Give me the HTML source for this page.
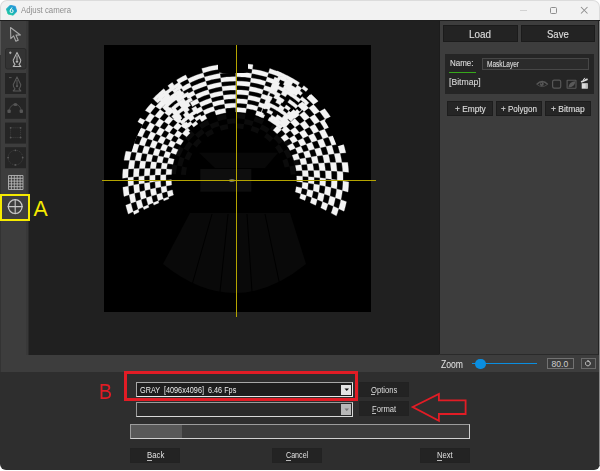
<!DOCTYPE html>
<html><head><meta charset="utf-8">
<style>
*{margin:0;padding:0;box-sizing:border-box}
html,body{width:600px;height:471px;overflow:hidden;background:#ffffff;font-family:"Liberation Sans",sans-serif}
.a{position:absolute}
.t{position:absolute;white-space:pre;transform-origin:0 0;line-height:1}
.bd{-webkit-text-stroke:0.15px currentColor}
#win{position:absolute;left:0;top:0;width:600px;height:470px;overflow:hidden}
.btn{position:absolute;background:#232323;border:1px solid #1b1b1b}
.sb{position:absolute;background:#252525;border:1px solid #1d1d1d}
.tb{position:absolute;left:5px;width:21px;height:21px;background:#262626;border-radius:1px}
</style></head><body>
<div id="win">
  <div class="a" style="left:0;top:19px;width:600px;height:451px;background:#2e2e2e;border-radius:0 0 6px 6px"></div>
  <div class="a" style="left:0;top:0;width:600px;height:20px;background:#f2f2f2;border-top:1px solid #dcdcdc;border-left:1px solid #dcdcdc;border-right:1px solid #dcdcdc;border-radius:7px 7px 0 0"></div>
  <svg class="a" style="left:6px;top:5px" width="11" height="11" viewBox="0 0 11 11">
    <defs><linearGradient id="ig" x1="0.8" y1="0" x2="0.1" y2="1"><stop offset="0" stop-color="#1f8fe0"/><stop offset="1" stop-color="#1ccf9a"/></linearGradient></defs>
    <polygon points="4.2,0.2 9.3,1.4 10.8,6.4 7.2,10.2 2.0,9.0 0.4,4.0" fill="url(#ig)" stroke="url(#ig)" stroke-width="0.8" stroke-linejoin="round"/>
    <path d="M6.3,2.6 Q4.2,3.6 4.1,6.0 A1.5,1.5 0 1 0 5.6,4.6" fill="none" stroke="#fff" stroke-width="1"/>
  </svg>
  <div class="t" style="left:20.5px;top:5px;font-size:9.4px;color:#8e8e8e;transform:scaleX(0.835)">Adjust camera</div>
  <div class="a" style="left:520px;top:10px;width:7px;height:1px;background:#d2d2d2"></div>
  <div class="a" style="left:550px;top:7px;width:7px;height:7px;border:1px solid #8e8e8e;border-radius:1.5px"></div>
  <svg class="a" style="left:580px;top:6px" width="9" height="9" viewBox="0 0 9 9"><path d="M1,1 L7.5,7.5 M7.5,1 L1,7.5" stroke="#8e8e8e" stroke-width="1.05"/></svg>
  <div class="a" style="left:0;top:20px;width:600px;height:1px;background:#1e1e1e"></div>

  <!-- toolbar + zoom bar background -->
  <div class="a" style="left:0;top:21px;width:2px;height:351px;background:#333"></div>
  <div class="a" style="left:0;top:21px;width:1px;height:34px;background:#555"></div>
  <div class="a" style="left:1px;top:21px;width:598px;height:351px;background:#3d3d3d"></div>
  <div class="a" style="left:26px;top:21px;width:2px;height:334px;background:#383838"></div>
  <!-- canvas -->
  <div class="a" style="left:29px;top:21px;width:410px;height:334px;background:#202020"></div>
  <div class="a" style="left:28px;top:21px;width:1px;height:334px;background:#2c2c2c"></div>
  <!-- right panel borders -->
  <div class="a" style="left:439px;top:21px;width:1px;height:334px;background:#1c1c1c"></div>
  <div class="a" style="left:439px;top:354px;width:160px;height:1px;background:#2a2a2a"></div>
  <div class="a" style="left:597.5px;top:21px;width:1px;height:334px;background:#232323"></div>
  <div class="a" style="left:599px;top:21px;width:1px;height:444px;background:#8a8a8a"></div>

  <!-- toolbar icons -->
  <svg class="a" style="left:0;top:22px" width="29" height="200" viewBox="0 22 29 200">
    <path d="M10.5,27.5 L10.8,38.6 L13.6,35.9 L15.9,41.2 L18.2,40.2 L16,35.1 L20.4,35 Z" fill="none" stroke="#a8a8a8" stroke-width="1.1" stroke-linejoin="round"/>
    <rect x="5.5" y="48.5" width="20.5" height="20.5" rx="2" fill="#333" stroke="#2a2a2a" stroke-width="1"/>
    <path d="M10.3,51.5 v2.6 M9,52.8 h2.6" stroke="#bbb" stroke-width="0.9"/>
    <path d="M17,52.4 L13.2,60.2 Q13.4,62.6 15,64.4 L13.2,66.4 H20.8 L19,64.4 Q20.6,62.6 20.8,60.2 Z M17,55.5 v5" fill="none" stroke="#b4b4b4" stroke-width="1.05" stroke-linejoin="round"/>
    <circle cx="17" cy="61.6" r="1.2" fill="#b4b4b4"/>
    <rect x="5" y="73" width="21" height="21" fill="#252525"/>
    <path d="M9,77.6 h2.6" stroke="#5c5c5c" stroke-width="0.9"/>
    <path d="M17,76.9 L13.2,84.7 Q13.4,87.1 15,88.9 L13.2,90.9 H20.8 L19,88.9 Q20.6,87.1 20.8,84.7 Z M17,80 v5" fill="none" stroke="#585858" stroke-width="1.05" stroke-linejoin="round"/>
    <circle cx="17" cy="86.1" r="1.2" fill="#585858"/>
    <rect x="5" y="97.8" width="21" height="21" fill="#252525"/>
    <path d="M9.2,111.3 C9.6,102.2 20.8,102.2 21.2,111.3" fill="none" stroke="#4e4e4e" stroke-width="0.9"/>
    <rect x="7.4" y="109.6" width="3.4" height="3.4" rx="1" fill="#555"/>
    <rect x="19.6" y="109.6" width="3.4" height="3.4" rx="1" fill="#555"/>
    <ellipse cx="15.4" cy="104.6" rx="2" ry="1.5" fill="#555"/>
    <rect x="5" y="122.6" width="21" height="21" fill="#252525"/>
    <rect x="10.6" y="127.8" width="10" height="9.8" fill="none" stroke="#474747" stroke-width="0.8" stroke-dasharray="1,1"/>
    <circle cx="10.6" cy="127.8" r="0.9" fill="#585858"/><circle cx="20.6" cy="127.8" r="0.9" fill="#585858"/>
    <circle cx="10.6" cy="137.6" r="0.9" fill="#585858"/><circle cx="20.6" cy="137.6" r="0.9" fill="#585858"/>
    <rect x="5" y="147.2" width="21" height="21" fill="#252525"/>
    <circle cx="15.4" cy="157.6" r="7.3" fill="none" stroke="#474747" stroke-width="0.8" stroke-dasharray="1,1"/>
    <circle cx="15.4" cy="150.3" r="0.9" fill="#5a5a5a"/><circle cx="15.4" cy="164.9" r="0.9" fill="#5a5a5a"/>
    <circle cx="8.1" cy="157.6" r="0.9" fill="#5a5a5a"/><circle cx="22.7" cy="157.6" r="0.9" fill="#5a5a5a"/>
    <path d="M8.5,175.5 v14 M11.4,175.5 v14 M14.3,175.5 v14 M17.2,175.5 v14 M20.1,175.5 v14 M23,175.5 v14 M8.5,175.5 h14.5 M8.5,178.3 h14.5 M8.5,181.1 h14.5 M8.5,183.9 h14.5 M8.5,186.7 h14.5 M8.5,189.5 h14.5" stroke="#b4b4b4" stroke-width="0.9"/>
    <rect x="1" y="195" width="28" height="25" fill="#3e3e3e"/>
    <circle cx="15.2" cy="206.6" r="6.9" fill="none" stroke="#c8c8c8" stroke-width="1.2"/>
    <path d="M7.6,206.6 h15.2 M15.2,199 v15.2" stroke="#c8c8c8" stroke-width="1.1"/>
  </svg>

  <!-- image -->
  <div class="a" style="left:104px;top:45px;width:267px;height:267px;background:#000">
    <svg width="267" height="267" viewBox="0 0 267 267" style="position:absolute;left:0;top:0"><defs><filter id="bl" x="-5%" y="-5%" width="110%" height="110%"><feGaussianBlur stdDeviation="0.6"/></filter></defs><path d="M86.0 168.0 L59.0 219.0 Q131.0 277.0 202.0 219.0 L186.0 168.0 Z" fill="#090909"/><path d="M108.0 169.0L88.0 240.0M124.0 169.0L116.0 247.0M143.0 169.0L148.0 247.0M161.0 169.0L176.0 241.0" stroke="#000" stroke-width="1"/><path fill="#0b0b0b" d="M76.9 129.7L77.1 128.0L77.3 126.4L77.5 124.7L77.8 123.1L78.1 121.5L83.0 122.6L82.7 124.1L82.4 125.5L82.2 127.0L82.0 128.5L81.9 130.0ZM67.0 129.0L67.1 127.0L67.3 125.1L67.6 123.2L68.0 121.2L68.4 119.3L73.2 120.4L72.9 122.2L72.6 123.9L72.3 125.7L72.1 127.5L71.9 129.3ZM73.2 120.4L73.7 118.7L74.1 116.9L74.7 115.2L75.2 113.5L75.9 111.8L80.5 113.6L79.9 115.2L79.4 116.7L78.9 118.3L78.5 119.9L78.1 121.5ZM80.5 113.6L81.1 112.1L81.8 110.6L82.5 109.1L83.3 107.6L84.1 106.2L88.4 108.7L87.7 110.0L87.0 111.3L86.4 112.7L85.7 114.0L85.2 115.4ZM71.2 110.0L71.9 108.2L72.7 106.4L73.6 104.6L74.5 102.9L75.4 101.2L79.7 103.7L78.9 105.3L78.0 106.9L77.3 108.5L76.5 110.1L75.9 111.8ZM79.7 103.7L80.7 102.1L81.6 100.6L82.6 99.1L83.7 97.7L84.8 96.2L88.7 99.3L87.7 100.6L86.7 102.0L85.8 103.4L84.9 104.7L84.1 106.2ZM88.7 99.3L89.7 98.1L90.8 96.8L91.9 95.6L93.1 94.4L94.3 93.3L97.7 96.9L96.6 98.0L95.6 99.0L94.5 100.1L93.6 101.3L92.6 102.4ZM80.9 93.1L82.1 91.6L83.4 90.1L84.7 88.7L86.1 87.3L87.5 86.0L90.9 89.6L89.6 90.9L88.3 92.2L87.1 93.5L85.9 94.8L84.8 96.2ZM90.9 89.6L92.2 88.4L93.6 87.2L95.0 86.1L96.4 85.0L97.9 84.0L100.7 88.1L99.4 89.1L98.1 90.1L96.8 91.1L95.5 92.2L94.3 93.3ZM100.7 88.1L102.1 87.2L103.5 86.3L104.9 85.5L106.4 84.7L107.9 84.0L110.0 88.5L108.7 89.2L107.4 89.9L106.1 90.6L104.8 91.4L103.6 92.2ZM95.1 79.9L96.7 78.8L98.4 77.8L100.0 76.8L101.8 75.9L103.5 75.0L105.7 79.5L104.1 80.3L102.5 81.1L100.9 82.0L99.4 83.0L97.9 84.0ZM105.7 79.5L107.3 78.7L109.0 78.0L110.7 77.4L112.3 76.7L114.1 76.2L115.5 81.0L114.0 81.5L112.4 82.0L110.9 82.6L109.4 83.3L107.9 84.0ZM115.5 81.0L117.1 80.5L118.7 80.1L120.3 79.7L121.9 79.4L123.6 79.1L124.3 84.1L122.8 84.3L121.4 84.6L119.9 84.9L118.5 85.3L117.0 85.7ZM112.6 71.4L114.5 70.9L116.3 70.4L118.2 69.9L120.2 69.6L122.1 69.2L122.8 74.2L121.1 74.5L119.3 74.8L117.5 75.2L115.8 75.7L114.1 76.2ZM122.8 74.2L124.6 73.9L126.4 73.7L128.2 73.6L130.0 73.5L131.8 73.5L131.8 78.5L130.1 78.5L128.5 78.6L126.9 78.7L125.2 78.9L123.6 79.1ZM131.8 78.5L133.5 78.5L135.1 78.6L136.7 78.7L138.4 78.9L140.0 79.1L139.3 84.1L137.8 83.9L136.3 83.7L134.8 83.6L133.3 83.5L131.8 83.5ZM131.8 68.5L133.8 68.5L135.7 68.6L137.6 68.8L139.6 69.0L141.5 69.2L140.8 74.2L139.0 73.9L137.2 73.7L135.4 73.6L133.6 73.5L131.8 73.5ZM140.8 74.2L142.5 74.5L144.3 74.8L146.1 75.2L147.8 75.7L149.5 76.2L148.1 81.0L146.5 80.5L144.9 80.1L143.3 79.7L141.7 79.4L140.0 79.1ZM148.1 81.0L149.6 81.5L151.2 82.0L152.7 82.6L154.2 83.3L155.7 84.0L153.6 88.5L152.2 87.9L150.8 87.3L149.4 86.7L148.0 86.2L146.6 85.7ZM151.0 71.4L152.9 72.0L154.7 72.7L156.5 73.4L158.3 74.2L160.1 75.0L157.9 79.5L156.3 78.7L154.6 78.0L152.9 77.4L151.3 76.7L149.5 76.2ZM157.9 79.5L159.5 80.3L161.1 81.1L162.7 82.0L164.2 83.0L165.7 84.0L162.9 88.1L161.5 87.2L160.1 86.3L158.7 85.5L157.2 84.7L155.7 84.0ZM162.9 88.1L164.2 89.1L165.5 90.1L166.8 91.1L168.1 92.2L169.3 93.3L165.9 96.9L164.8 95.9L163.6 95.0L162.5 94.0L161.3 93.1L160.0 92.2ZM168.5 79.9L170.1 81.0L171.7 82.2L173.2 83.4L174.7 84.7L176.1 86.0L172.7 89.6L171.4 88.4L170.0 87.2L168.6 86.1L167.2 85.0L165.7 84.0ZM172.7 89.6L174.0 90.9L175.3 92.2L176.5 93.5L177.7 94.8L178.8 96.2L174.9 99.3L173.9 98.1L172.8 96.8L171.7 95.6L170.5 94.4L169.3 93.3ZM174.9 99.3L175.9 100.6L176.9 102.0L177.8 103.4L178.7 104.7L179.5 106.2L175.2 108.7L174.4 107.4L173.6 106.1L172.8 104.8L171.9 103.6L171.0 102.4ZM182.7 93.1L183.9 94.7L185.1 96.3L186.2 97.9L187.2 99.5L188.2 101.2L183.9 103.7L182.9 102.1L182.0 100.6L181.0 99.1L179.9 97.7L178.8 96.2ZM183.9 103.7L184.7 105.3L185.6 106.9L186.3 108.5L187.1 110.1L187.7 111.8L183.1 113.6L182.5 112.1L181.8 110.6L181.1 109.1L180.3 107.6L179.5 106.2ZM183.1 113.6L183.7 115.2L184.2 116.7L184.7 118.3L185.1 119.9L185.5 121.5L180.6 122.6L180.2 121.1L179.9 119.7L179.4 118.2L178.9 116.8L178.4 115.4ZM192.4 110.0L193.1 111.8L193.7 113.7L194.3 115.5L194.8 117.4L195.2 119.3L190.4 120.4L189.9 118.7L189.5 116.9L188.9 115.2L188.4 113.5L187.7 111.8ZM190.4 120.4L190.7 122.2L191.0 123.9L191.3 125.7L191.5 127.5L191.7 129.3L186.7 129.7L186.5 128.0L186.3 126.4L186.1 124.7L185.8 123.1L185.5 121.5Z"/><path d="M95.0 107.7L174.0 107.7L161.0 123.0L111.0 123.0Z" fill="#080808"/><rect x="96.3" y="124.0" width="51" height="22.7" fill="#0e0e0e"/><ellipse cx="128.0" cy="135.5" rx="3.2" ry="1.1" fill="#d8d8c8"/><g filter="url(#bl)"><path fill="#f4f4f4" stroke="#f4f4f4" stroke-width="0.3" d="M95.3 72.7L97.1 71.6L99.0 70.6L100.9 69.7L102.9 73.6L101.1 74.5L99.3 75.5L97.5 76.5ZM90.7 65.2L92.8 63.9L94.9 62.8L97.1 61.7L99.0 65.7L97.0 66.7L95.0 67.8L93.0 68.9ZM86.2 57.6L88.5 56.3L90.9 55.0L93.3 53.8L95.2 57.8L92.9 58.9L90.7 60.1L88.5 61.4ZM81.7 50.0L84.2 48.6L86.8 47.2L89.4 45.8L91.3 49.8L88.8 51.1L86.4 52.4L83.9 53.8ZM77.1 42.5L79.9 40.9L82.7 39.3L85.6 37.9L87.5 41.9L84.8 43.3L82.0 44.7L79.4 46.3ZM72.6 34.9L75.6 33.2L78.6 31.5L81.7 30.0L83.7 33.9L80.7 35.4L77.7 37.0L74.8 38.7ZM99.0 65.7L101.1 64.7L103.1 63.8L105.3 63.0L107.4 62.3L109.5 61.6L110.8 65.8L108.8 66.4L106.8 67.1L104.8 67.9L102.9 68.8L100.9 69.7ZM95.2 57.8L97.5 56.7L99.8 55.7L102.1 54.8L104.5 53.9L106.9 53.1L108.2 57.3L105.9 58.1L103.7 58.9L101.5 59.8L99.3 60.7L97.1 61.7ZM91.3 49.8L93.9 48.6L96.4 47.5L99.0 46.5L101.7 45.6L104.3 44.7L105.6 48.9L103.1 49.7L100.6 50.6L98.1 51.6L95.7 52.7L93.3 53.8ZM87.5 41.9L90.3 40.6L93.1 39.4L95.9 38.3L98.8 37.2L101.7 36.3L103.0 40.5L100.2 41.4L97.5 42.4L94.8 43.5L92.1 44.6L89.4 45.8ZM83.7 33.9L86.7 32.5L89.7 31.2L92.8 30.0L95.9 28.9L99.1 27.9L100.4 32.1L97.4 33.1L94.4 34.1L91.4 35.3L88.5 36.6L85.6 37.9ZM110.8 65.8L112.9 65.2L114.9 64.6L117.0 64.2L119.1 63.7L121.2 63.4L121.9 67.7L119.9 68.1L117.9 68.5L116.0 68.9L114.1 69.4L112.1 70.0ZM108.2 57.3L110.5 56.7L112.8 56.1L115.2 55.5L117.5 55.1L119.9 54.7L120.5 59.0L118.3 59.4L116.1 59.8L113.9 60.3L111.7 60.9L109.5 61.6ZM105.6 48.9L108.2 48.2L110.7 47.5L113.3 46.9L115.9 46.4L118.6 46.0L119.2 50.3L116.7 50.7L114.2 51.2L111.8 51.8L109.3 52.4L106.9 53.1ZM103.0 40.5L105.8 39.7L108.6 38.9L111.5 38.3L114.4 37.7L117.2 37.2L117.9 41.6L115.1 42.0L112.4 42.6L109.7 43.2L107.0 43.9L104.3 44.7ZM100.4 32.1L103.5 31.2L106.5 30.4L109.7 29.7L112.8 29.0L115.9 28.5L116.6 32.9L113.6 33.4L110.6 34.0L107.6 34.6L104.6 35.4L101.7 36.3ZM97.8 23.6L101.1 22.7L104.4 21.8L107.8 21.0L111.2 20.4L114.6 19.8L115.3 24.2L112.0 24.7L108.7 25.3L105.5 26.1L102.3 26.9L99.1 27.9ZM120.5 59.0L122.8 58.7L125.0 58.5L127.3 58.3L129.5 58.2L131.8 58.2L131.8 62.6L129.7 62.6L127.5 62.7L125.4 62.9L123.3 63.1L121.2 63.4ZM119.2 50.3L121.7 50.0L124.2 49.7L126.8 49.5L129.3 49.4L131.8 49.4L131.8 53.8L129.4 53.8L127.0 53.9L124.6 54.1L122.2 54.3L119.9 54.7ZM117.9 41.6L120.7 41.2L123.4 40.9L126.2 40.7L129.0 40.6L131.8 40.5L131.8 45.0L129.1 45.0L126.5 45.1L123.8 45.3L121.2 45.6L118.6 46.0ZM116.6 32.9L119.6 32.5L122.6 32.1L125.7 31.9L128.7 31.8L131.8 31.7L131.8 36.1L128.9 36.2L126.0 36.3L123.0 36.5L120.1 36.8L117.2 37.2ZM115.3 24.2L118.6 23.7L121.9 23.4L125.2 23.1L128.5 23.0L131.8 22.9L131.8 27.3L128.6 27.4L125.4 27.5L122.3 27.7L119.1 28.1L115.9 28.5ZM131.8 62.6L133.9 62.6L136.1 62.7L138.2 62.9L140.3 63.1L142.4 63.4L141.7 67.7L139.8 67.5L137.8 67.3L135.8 67.1L133.8 67.0L131.8 67.0ZM131.8 53.8L134.2 53.8L136.6 53.9L139.0 54.1L141.4 54.3L143.7 54.7L143.1 59.0L140.8 58.7L138.6 58.5L136.3 58.3L134.1 58.2L131.8 58.2ZM131.8 45.0L134.5 45.0L137.1 45.1L139.8 45.3L142.4 45.6L145.0 46.0L144.4 50.3L141.9 50.0L139.4 49.7L136.8 49.5L134.3 49.4L131.8 49.4ZM131.8 36.1L134.7 36.2L137.6 36.3L140.6 36.5L143.5 36.8L146.4 37.2L145.7 41.6L142.9 41.2L140.2 40.9L137.4 40.7L134.6 40.6L131.8 40.5ZM131.8 27.3L135.0 27.4L138.2 27.5L141.3 27.7L144.5 28.1L147.7 28.5L147.0 32.9L144.0 32.5L141.0 32.1L137.9 31.9L134.9 31.8L131.8 31.7ZM131.8 18.5L135.3 18.6L138.7 18.7L142.1 19.0L145.6 19.3L149.0 19.8L148.3 24.2L145.0 23.7L141.7 23.4L138.4 23.1L135.1 23.0L131.8 22.9ZM143.1 59.0L145.3 59.4L147.5 59.8L149.7 60.3L151.9 60.9L154.1 61.6L152.8 65.8L150.7 65.2L148.7 64.6L146.6 64.2L144.5 63.7L142.4 63.4ZM144.4 50.3L146.9 50.7L149.4 51.2L151.8 51.8L154.3 52.4L156.7 53.1L155.4 57.3L153.1 56.7L150.8 56.1L148.4 55.5L146.1 55.1L143.7 54.7ZM145.7 41.6L148.5 42.0L151.2 42.6L153.9 43.2L156.6 43.9L159.3 44.7L158.0 48.9L155.4 48.2L152.9 47.5L150.3 46.9L147.7 46.4L145.0 46.0ZM147.0 32.9L150.0 33.4L153.0 34.0L156.0 34.6L159.0 35.4L161.9 36.3L160.6 40.5L157.8 39.7L155.0 38.9L152.1 38.3L149.2 37.7L146.4 37.2ZM148.3 24.2L151.6 24.7L154.9 25.3L158.1 26.1L161.3 26.9L164.5 27.9L163.2 32.1L160.1 31.2L157.1 30.4L153.9 29.7L150.8 29.0L147.7 28.5ZM152.8 65.8L155.0 66.5L157.3 67.3L159.5 68.2L157.8 72.3L155.7 71.4L153.6 70.7L151.5 70.0ZM155.4 57.3L157.9 58.2L160.5 59.1L163.0 60.1L161.2 64.2L158.9 63.2L156.5 62.3L154.1 61.6ZM158.0 48.9L160.8 49.8L163.6 50.9L166.4 52.0L164.7 56.1L162.0 55.0L159.4 54.0L156.7 53.1ZM160.6 40.5L163.7 41.5L166.8 42.6L169.8 43.9L168.1 47.9L165.2 46.8L162.3 45.7L159.3 44.7ZM163.2 32.1L166.6 33.2L170.0 34.4L173.3 35.8L171.6 39.8L168.4 38.5L165.2 37.3L161.9 36.3ZM165.8 23.6L169.5 24.9L173.1 26.2L176.7 27.6L175.0 31.7L171.6 30.3L168.0 29.0L164.5 27.9ZM59.9 155.8L59.6 154.8L59.3 153.8L64.3 151.9L64.6 152.8L64.9 153.8ZM49.9 160.1L49.5 158.9L49.2 157.8L54.2 155.8L54.5 156.8L54.8 157.9ZM40.0 164.6L39.5 163.4L39.1 162.1L44.1 159.9L44.5 161.1L44.9 162.3ZM30.2 169.5L29.7 168.1L29.2 166.6L34.2 164.3L34.6 165.7L35.1 167.0ZM64.3 151.9L63.9 150.1L63.5 148.2L63.1 146.4L68.3 145.0L68.7 146.7L69.0 148.4L69.5 150.0ZM54.2 155.8L53.6 153.7L53.1 151.6L52.7 149.5L57.9 147.9L58.3 149.9L58.7 151.8L59.3 153.8ZM44.1 159.9L43.5 157.5L42.8 155.2L42.3 152.8L47.5 151.1L48.0 153.3L48.5 155.6L49.2 157.8ZM34.2 164.3L33.4 161.7L32.7 159.0L32.0 156.4L37.1 154.5L37.7 157.1L38.4 159.6L39.1 162.1ZM24.3 169.0L23.4 166.1L22.6 163.2L21.8 160.3L26.9 158.3L27.6 161.1L28.4 163.9L29.2 166.6ZM57.9 147.9L57.5 145.9L57.2 143.9L57.0 141.9L62.3 140.9L62.5 142.7L62.8 144.6L63.1 146.4ZM47.5 151.1L47.0 148.8L46.6 146.6L46.3 144.3L51.6 143.1L51.9 145.2L52.3 147.3L52.7 149.5ZM37.1 154.5L36.6 152.0L36.2 149.5L35.8 146.9L41.0 145.5L41.4 148.0L41.8 150.4L42.3 152.8ZM26.9 158.3L26.3 155.5L25.7 152.6L25.2 149.8L30.5 148.3L30.9 151.0L31.4 153.7L32.0 156.4ZM62.3 140.9L62.1 139.0L62.0 137.1L61.9 135.3L67.3 134.7L67.4 136.4L67.5 138.1L67.6 139.9ZM51.6 143.1L51.4 140.9L51.2 138.8L51.1 136.6L56.5 135.9L56.6 137.9L56.8 139.9L57.0 141.9ZM41.0 145.5L40.8 143.1L40.5 140.7L40.4 138.2L45.7 137.4L45.9 139.7L46.1 142.0L46.3 144.3ZM30.5 148.3L30.1 145.6L29.9 142.9L29.6 140.1L35.0 139.1L35.2 141.7L35.4 144.3L35.8 146.9ZM20.0 151.4L19.6 148.4L19.2 145.3L18.9 142.3L24.3 141.2L24.5 144.1L24.9 146.9L25.2 149.8ZM56.5 135.9L56.5 133.9L56.5 131.9L56.6 129.9L62.0 129.7L61.9 131.5L61.9 133.4L61.9 135.3ZM45.7 137.4L45.7 135.1L45.7 132.8L45.7 130.5L51.1 130.1L51.1 132.3L51.1 134.4L51.1 136.6ZM35.0 139.1L34.9 136.6L34.8 134.0L34.9 131.4L40.3 130.9L40.2 133.3L40.3 135.8L40.4 138.2ZM24.3 141.2L24.1 138.3L24.0 135.4L24.0 132.6L29.4 131.9L29.4 134.7L29.5 137.4L29.6 140.1ZM62.0 129.7L62.1 127.8L62.3 125.9L62.5 124.1L67.9 124.4L67.7 126.1L67.6 127.8L67.4 129.5ZM51.1 130.1L51.3 128.0L51.4 125.8L51.7 123.7L57.1 123.8L56.9 125.8L56.7 127.8L56.6 129.9ZM40.3 130.9L40.4 128.4L40.6 126.0L40.8 123.5L46.2 123.6L46.0 125.9L45.8 128.2L45.7 130.5ZM29.4 131.9L29.5 129.2L29.7 126.4L29.9 123.7L35.3 123.6L35.1 126.2L34.9 128.8L34.9 131.4ZM18.6 133.3L18.6 130.2L18.8 127.2L19.0 124.2L24.4 123.9L24.2 126.8L24.1 129.7L24.0 132.6ZM57.1 123.8L57.4 121.8L57.7 119.8L58.1 117.9L63.5 118.5L63.1 120.4L62.8 122.2L62.5 124.1ZM46.2 123.6L46.5 121.3L46.9 119.0L47.3 116.7L52.7 117.3L52.3 119.4L52.0 121.5L51.7 123.7ZM35.3 123.6L35.6 121.0L36.0 118.4L36.4 115.9L41.9 116.3L41.4 118.7L41.1 121.1L40.8 123.5ZM24.4 123.9L24.7 121.0L25.1 118.2L25.6 115.3L31.0 115.6L30.6 118.3L30.2 121.0L29.9 123.7ZM63.5 118.5L63.9 116.7L64.4 114.9L64.9 113.1L70.2 114.3L69.7 115.9L69.3 117.6L68.9 119.3ZM52.7 117.3L53.2 115.2L53.7 113.1L54.3 111.0L59.6 112.0L59.1 113.9L58.6 115.9L58.1 117.9ZM41.9 116.3L42.4 113.9L42.9 111.5L43.5 109.1L48.9 110.0L48.3 112.2L47.8 114.5L47.3 116.7ZM31.0 115.6L31.5 112.9L32.1 110.2L32.8 107.5L38.2 108.3L37.5 110.8L37.0 113.3L36.4 115.9ZM20.1 115.2L20.6 112.2L21.2 109.2L21.9 106.3L27.4 106.9L26.7 109.7L26.1 112.5L25.6 115.3ZM59.6 112.0L60.2 110.1L60.9 108.2L61.6 106.3L66.8 107.8L66.1 109.6L65.5 111.3L64.9 113.1ZM48.9 110.0L49.6 107.8L50.3 105.6L51.1 103.4L56.3 104.8L55.6 106.9L54.9 108.9L54.3 111.0ZM38.2 108.3L38.9 105.8L39.6 103.3L40.5 100.9L45.8 102.1L45.0 104.4L44.2 106.8L43.5 109.1ZM27.4 106.9L28.1 104.1L28.9 101.3L29.8 98.6L35.2 99.7L34.3 102.3L33.5 104.9L32.8 107.5ZM66.8 107.8L67.5 106.1L68.2 104.4L69.0 102.7L74.1 104.7L73.3 106.2L72.6 107.8L72.0 109.4ZM56.3 104.8L57.1 102.8L58.0 100.8L58.9 98.9L64.0 100.7L63.1 102.6L62.3 104.4L61.6 106.3ZM45.8 102.1L46.7 99.8L47.6 97.6L48.6 95.3L53.7 97.1L52.8 99.2L51.9 101.3L51.1 103.4ZM35.2 99.7L36.1 97.1L37.1 94.6L38.2 92.0L43.4 93.7L42.4 96.0L41.4 98.4L40.5 100.9ZM24.5 97.5L25.5 94.7L26.5 91.8L27.7 89.0L33.0 90.5L31.8 93.2L30.8 95.9L29.8 98.6ZM64.0 100.7L64.9 98.9L65.8 97.2L66.8 95.4L71.7 97.7L70.8 99.4L69.9 101.0L69.0 102.7ZM53.7 97.1L54.7 95.0L55.8 92.9L56.9 90.9L61.9 93.1L60.8 95.0L59.8 96.9L58.9 98.9ZM43.4 93.7L44.5 91.3L45.7 89.0L46.9 86.7L51.9 88.8L50.7 90.9L49.6 93.1L48.6 95.3ZM33.0 90.5L34.1 87.9L35.4 85.3L36.7 82.7L41.8 84.7L40.5 87.1L39.3 89.6L38.2 92.0ZM71.7 97.7L72.7 96.2L73.7 94.6L74.8 93.0L79.4 95.8L78.5 97.2L77.5 98.7L76.6 100.1ZM61.9 93.1L63.0 91.3L64.1 89.5L65.3 87.7L70.1 90.3L68.9 92.0L67.9 93.7L66.8 95.4ZM51.9 88.8L53.1 86.7L54.4 84.6L55.8 82.5L60.6 85.1L59.3 87.0L58.1 88.9L56.9 90.9ZM41.8 84.7L43.2 82.3L44.6 79.9L46.0 77.6L50.9 80.0L49.5 82.2L48.2 84.4L46.9 86.7ZM31.6 80.8L33.0 78.2L34.6 75.5L36.1 73.0L41.1 75.3L39.6 77.7L38.1 80.2L36.7 82.7ZM70.1 90.3L71.3 88.7L72.5 87.1L73.7 85.5L78.2 88.6L77.0 90.1L75.9 91.5L74.8 93.0ZM60.6 85.1L61.9 83.2L63.3 81.3L64.7 79.5L69.2 82.5L67.9 84.2L66.6 85.9L65.3 87.7ZM50.9 80.0L52.4 77.9L53.9 75.8L55.5 73.7L60.1 76.6L58.6 78.5L57.1 80.5L55.8 82.5ZM41.1 75.3L42.7 72.9L44.3 70.5L46.1 68.2L50.8 70.9L49.1 73.1L47.5 75.3L46.0 77.6ZM78.2 88.6L79.4 87.2L80.7 85.8L82.0 84.4L86.1 87.9L84.9 89.2L83.8 90.5L82.6 91.8ZM69.2 82.5L70.6 80.8L72.1 79.2L73.5 77.6L77.8 81.0L76.4 82.5L75.0 84.0L73.7 85.5ZM60.1 76.6L61.6 74.7L63.2 72.8L64.9 71.0L69.2 74.3L67.7 76.0L66.2 77.7L64.7 79.5ZM50.8 70.9L52.5 68.8L54.2 66.7L56.1 64.6L60.5 67.8L58.8 69.7L57.1 71.7L55.5 73.7ZM41.3 65.5L43.2 63.1L45.1 60.7L47.1 58.5L51.6 61.5L49.7 63.7L47.8 65.9L46.1 68.2ZM77.8 81.0L79.2 79.6L80.7 78.2L82.2 76.8L86.1 80.6L84.7 81.9L83.3 83.1L82.0 84.4ZM69.2 74.3L70.8 72.6L72.5 71.0L74.2 69.5L78.2 73.1L76.6 74.6L75.0 76.1L73.5 77.6ZM60.5 67.8L62.3 65.9L64.1 64.1L66.0 62.3L70.1 65.8L68.3 67.5L66.6 69.2L64.9 71.0ZM51.6 61.5L53.5 59.4L55.5 57.3L57.6 55.3L61.8 58.8L59.9 60.7L57.9 62.6L56.1 64.6ZM173.0 81.0L174.6 82.2L176.0 83.5L177.5 84.8L173.2 88.7L171.8 87.5L170.5 86.3L169.1 85.2ZM181.2 72.7L182.9 74.1L184.6 75.7L186.3 77.2L181.8 81.0L180.3 79.5L178.7 78.1L177.1 76.8ZM189.6 64.6L191.5 66.3L193.5 68.1L195.4 69.9L190.8 73.5L189.0 71.8L187.2 70.2L185.3 68.6ZM198.2 56.8L200.4 58.8L202.6 60.8L204.7 62.9L200.0 66.4L198.0 64.4L196.0 62.5L193.9 60.7ZM207.2 49.3L209.6 51.5L211.9 53.8L214.2 56.2L209.4 59.5L207.2 57.3L205.0 55.1L202.7 53.0ZM181.8 81.0L183.3 82.4L184.8 84.0L186.2 85.5L181.5 88.9L180.2 87.5L178.9 86.1L177.5 84.8ZM190.8 73.5L192.5 75.3L194.2 77.1L195.8 78.9L191.0 82.2L189.5 80.5L187.9 78.8L186.3 77.2ZM200.0 66.4L201.9 68.4L203.8 70.5L205.6 72.6L200.6 75.7L198.9 73.7L197.2 71.8L195.4 69.9ZM209.4 59.5L211.5 61.8L213.6 64.2L215.6 66.6L210.5 69.5L208.6 67.3L206.7 65.1L204.7 62.9ZM181.5 88.9L182.8 90.4L184.0 91.9L185.2 93.4L180.3 96.5L179.2 95.1L178.1 93.8L176.9 92.4ZM191.0 82.2L192.4 83.9L193.9 85.7L195.2 87.5L190.2 90.4L188.9 88.8L187.6 87.1L186.2 85.5ZM200.6 75.7L202.3 77.7L203.9 79.8L205.4 81.9L200.3 84.7L198.9 82.7L197.3 80.8L195.8 78.9ZM210.5 69.5L212.4 71.9L214.1 74.2L215.8 76.6L210.6 79.2L209.0 77.0L207.3 74.8L205.6 72.6ZM220.7 63.7L222.6 66.3L224.6 69.0L226.4 71.7L221.1 74.1L219.3 71.6L217.5 69.0L215.6 66.6ZM190.2 90.4L191.4 92.2L192.6 93.9L193.7 95.7L188.5 98.3L187.5 96.6L186.4 95.0L185.2 93.4ZM200.3 84.7L201.7 86.7L203.0 88.8L204.3 90.8L199.0 93.2L197.8 91.3L196.5 89.4L195.2 87.5ZM210.6 79.2L212.1 81.6L213.6 83.9L215.0 86.3L209.6 88.5L208.3 86.3L206.9 84.1L205.4 81.9ZM221.1 74.1L222.8 76.8L224.4 79.4L225.9 82.1L220.5 84.2L219.0 81.6L217.4 79.1L215.8 76.6ZM188.5 98.3L189.5 99.9L190.5 101.6L191.4 103.3L186.0 105.5L185.2 103.9L184.3 102.4L183.3 100.9ZM199.0 93.2L200.1 95.2L201.2 97.2L202.2 99.2L196.8 101.2L195.8 99.4L194.8 97.5L193.7 95.7ZM209.6 88.5L210.9 90.8L212.1 93.1L213.3 95.5L207.7 97.3L206.7 95.1L205.5 93.0L204.3 90.8ZM220.5 84.2L221.8 86.8L223.2 89.4L224.4 92.1L218.8 93.8L217.6 91.2L216.4 88.8L215.0 86.3ZM231.4 80.2L232.9 83.1L234.4 86.1L235.7 89.1L230.0 90.5L228.7 87.7L227.4 84.9L225.9 82.1ZM196.8 101.2L197.7 103.1L198.6 105.1L199.4 107.0L193.8 108.6L193.0 106.8L192.2 105.1L191.4 103.3ZM207.7 97.3L208.8 99.6L209.7 101.8L210.6 104.1L205.0 105.5L204.1 103.4L203.2 101.3L202.2 99.2ZM218.8 93.8L219.9 96.3L221.0 98.9L222.0 101.5L216.3 102.7L215.3 100.3L214.3 97.9L213.3 95.5ZM230.0 90.5L231.2 93.4L232.4 96.3L233.4 99.3L227.7 100.3L226.7 97.6L225.6 94.8L224.4 92.1ZM193.8 108.6L194.5 110.5L195.1 112.3L195.7 114.1L190.0 115.3L189.5 113.7L188.9 112.0L188.2 110.3ZM205.0 105.5L205.7 107.7L206.5 109.8L207.1 112.0L201.4 113.0L200.8 111.0L200.1 109.0L199.4 107.0ZM216.3 102.7L217.1 105.2L217.9 107.7L218.6 110.2L212.9 111.1L212.2 108.7L211.4 106.4L210.6 104.1ZM227.7 100.3L228.6 103.1L229.4 106.0L230.2 108.8L224.4 109.5L223.7 106.8L222.8 104.1L222.0 101.5ZM239.2 98.3L240.2 101.4L241.0 104.6L241.8 107.8L236.0 108.2L235.2 105.2L234.4 102.2L233.4 99.3ZM201.4 113.0L202.0 115.1L202.5 117.1L202.9 119.2L197.2 119.8L196.7 117.9L196.2 116.0L195.7 114.1ZM212.9 111.1L213.5 113.4L214.0 115.8L214.5 118.2L208.7 118.6L208.2 116.4L207.7 114.2L207.1 112.0ZM224.4 109.5L225.1 112.2L225.6 114.9L226.1 117.6L220.3 117.9L219.8 115.3L219.3 112.8L218.6 110.2ZM236.0 108.2L236.7 111.3L237.3 114.3L237.8 117.4L232.0 117.5L231.5 114.6L230.9 111.7L230.2 108.8ZM197.2 119.8L197.5 121.7L197.8 123.6L198.1 125.5L192.3 125.7L192.1 124.0L191.7 122.2L191.4 120.5ZM208.7 118.6L209.1 120.9L209.4 123.1L209.7 125.4L203.9 125.4L203.6 123.3L203.3 121.2L202.9 119.2ZM220.3 117.9L220.7 120.5L221.1 123.1L221.3 125.7L215.5 125.5L215.3 123.0L214.9 120.6L214.5 118.2ZM232.0 117.5L232.4 120.4L232.7 123.3L233.0 126.3L227.2 125.9L226.9 123.1L226.6 120.4L226.1 117.6ZM243.7 117.5L244.1 120.7L244.4 124.0L244.6 127.3L238.8 126.7L238.6 123.6L238.2 120.5L237.8 117.4ZM203.9 125.4L204.1 127.5L204.3 129.6L204.3 131.7L198.5 131.3L198.5 129.4L198.3 127.5L198.1 125.5ZM215.5 125.5L215.7 127.9L215.9 130.4L215.9 132.8L210.1 132.2L210.1 129.9L209.9 127.7L209.7 125.4ZM227.2 125.9L227.3 128.7L227.4 131.5L227.5 134.3L221.7 133.5L221.7 130.9L221.5 128.3L221.3 125.7ZM238.8 126.7L239.0 129.8L239.0 133.0L239.0 136.1L233.2 135.1L233.2 132.2L233.2 129.2L233.0 126.3ZM198.5 131.3L198.6 133.3L198.6 135.2L198.5 137.2L192.7 136.4L192.8 134.6L192.8 132.8L192.7 131.0ZM210.1 132.2L210.1 134.5L210.1 136.8L209.9 139.1L204.2 138.1L204.3 136.0L204.4 133.8L204.3 131.7ZM221.7 133.5L221.7 136.1L221.5 138.7L221.3 141.3L215.6 140.1L215.8 137.7L215.9 135.3L215.9 132.8ZM233.2 135.1L233.1 138.1L233.0 141.0L232.7 144.0L227.0 142.6L227.3 139.8L227.4 137.0L227.5 134.3ZM244.7 137.1L244.6 140.4L244.3 143.7L244.0 147.0L238.4 145.4L238.7 142.3L238.9 139.2L239.0 136.1ZM204.2 138.1L204.0 140.2L203.8 142.3L203.5 144.4L197.9 143.0L198.2 141.0L198.3 139.1L198.5 137.2ZM215.6 140.1L215.4 142.6L215.1 145.0L214.8 147.4L209.2 145.8L209.5 143.6L209.7 141.3L209.9 139.1ZM227.0 142.6L226.7 145.4L226.3 148.1L225.9 150.9L220.3 149.1L220.7 146.5L221.1 143.9L221.3 141.3ZM238.4 145.4L238.0 148.5L237.5 151.6L236.9 154.7L231.4 152.7L231.9 149.8L232.4 146.9L232.7 144.0ZM197.9 143.0L197.6 144.9L197.2 146.8L196.8 148.7L191.3 146.9L191.7 145.2L192.0 143.4L192.3 141.7ZM209.2 145.8L208.8 148.1L208.3 150.3L207.8 152.5L202.3 150.6L202.8 148.5L203.2 146.4L203.5 144.4ZM220.3 149.1L219.8 151.7L219.3 154.2L218.6 156.8L213.2 154.6L213.8 152.2L214.3 149.8L214.8 147.4ZM231.4 152.7L230.8 155.6L230.1 158.5L229.4 161.3L224.0 159.0L224.7 156.3L225.3 153.6L225.9 150.9ZM242.4 156.7L241.7 159.9L240.9 163.1L240.0 166.2L234.7 163.7L235.5 160.7L236.3 157.7L236.9 154.7ZM202.3 150.6L201.9 152.2L201.4 153.8L201.0 155.4L195.6 153.2L196.1 151.7L196.5 150.2L196.8 148.7ZM213.2 154.6L212.7 156.5L212.2 158.4L211.6 160.2L206.3 157.8L206.8 156.1L207.3 154.3L207.8 152.5ZM224.0 159.0L223.4 161.1L222.7 163.3L222.0 165.4L216.8 162.8L217.5 160.8L218.1 158.8L218.6 156.8ZM234.7 163.7L233.9 166.1L233.2 168.5L232.3 170.8L227.2 168.1L228.0 165.8L228.7 163.6L229.4 161.3Z"/><path fill="#f2f2f2" stroke="#f2f2f2" stroke-width="0.4" d="M81.6 85.1L82.7 84.0L83.7 83.0L85.9 85.4L84.9 86.3L84.0 87.3ZM87.7 79.5L89.1 78.4L90.5 77.3L91.9 76.3L93.8 79.0L92.4 79.9L91.0 81.0L89.7 82.0ZM96.4 73.4L97.2 73.0L98.0 72.5L99.6 75.3L98.8 75.8L98.0 76.2ZM82.4 79.8L83.7 78.6L85.1 77.5L86.4 76.4L88.4 78.9L87.1 79.9L85.9 81.0L84.6 82.2ZM90.7 73.2L92.2 72.2L93.7 71.3L95.2 70.4L96.8 73.2L95.4 74.0L93.9 74.9L92.5 75.9ZM95.2 70.4L95.8 70.0L96.4 69.7L98.0 72.5L97.4 72.8L96.8 73.2ZM77.0 80.6L78.7 78.9L80.4 77.2L82.6 79.6L80.9 81.2L79.3 82.8ZM84.5 73.8L86.6 72.2L88.7 70.6L90.6 73.3L88.5 74.8L86.5 76.3ZM75.9 77.0L77.9 75.2L79.8 73.4L81.9 75.9L80.1 77.6L78.2 79.3ZM79.8 73.4L81.9 71.7L83.9 70.1L85.9 72.7L83.9 74.2L81.9 75.9ZM83.9 70.1L86.1 68.5L88.3 67.1L90.0 69.8L87.9 71.2L85.9 72.7ZM88.3 67.1L90.5 65.6L92.8 64.3L94.4 67.1L92.2 68.4L90.0 69.8ZM92.8 64.3L93.0 64.2L93.3 64.0L94.9 66.9L94.6 67.0L94.4 67.1ZM72.3 76.1L73.7 74.7L75.2 73.3L77.4 75.6L76.0 77.0L74.7 78.3ZM79.2 69.8L81.2 68.1L83.3 66.5L85.2 69.2L83.2 70.7L81.2 72.3ZM87.7 63.6L89.7 62.4L91.7 61.2L93.3 64.0L91.3 65.1L89.4 66.3ZM71.3 72.5L73.2 70.6L75.2 68.9L77.3 71.3L75.5 73.0L73.6 74.8ZM79.3 65.5L81.4 63.9L83.6 62.4L85.4 65.1L83.3 66.6L81.3 68.1ZM67.7 71.6L68.0 71.3L68.3 71.0L70.6 73.2L70.3 73.5L70.0 73.8ZM68.3 71.0L70.2 69.1L72.1 67.3L74.3 69.7L72.4 71.5L70.6 73.2ZM72.1 67.3L74.1 65.6L76.1 63.9L78.1 66.4L76.2 68.1L74.3 69.7ZM76.1 63.9L78.2 62.3L80.3 60.7L82.2 63.4L80.1 64.9L78.1 66.4ZM80.3 60.7L82.5 59.2L84.7 57.8L86.4 60.6L84.3 61.9L82.2 63.4ZM67.6 67.1L69.5 65.3L71.5 63.5L73.6 66.0L71.7 67.7L69.8 69.4ZM75.6 60.2L77.7 58.6L79.9 57.1L81.7 59.8L79.6 61.3L77.5 62.8ZM79.9 57.1L82.1 55.7L84.3 54.3L86.0 57.1L83.8 58.4L81.7 59.8ZM84.3 54.3L85.7 53.5L87.0 52.7L88.6 55.5L87.3 56.3L86.0 57.1ZM63.0 67.1L63.2 66.9L63.4 66.8L65.7 69.0L65.5 69.2L65.4 69.3ZM67.1 63.1L69.1 61.3L71.1 59.6L73.2 62.1L71.2 63.8L69.3 65.5ZM71.1 59.6L73.2 58.0L75.3 56.4L77.2 59.0L75.2 60.5L73.2 62.1ZM75.3 56.4L77.4 54.9L79.6 53.4L81.4 56.1L79.3 57.5L77.2 59.0ZM84.1 50.6L84.8 50.3L85.5 49.9L87.0 52.7L86.4 53.1L85.7 53.4ZM60.7 64.8L62.4 63.1L64.1 61.5L66.3 63.8L64.7 65.4L63.0 67.1ZM72.2 54.7L74.3 53.1L76.5 51.6L78.3 54.3L76.2 55.7L74.1 57.3ZM76.5 51.6L78.7 50.2L80.9 48.8L82.6 51.5L80.4 52.9L78.3 54.3ZM80.9 48.8L82.4 47.9L83.9 47.1L85.5 49.9L84.0 50.7L82.6 51.5ZM58.4 62.6L60.1 60.8L61.9 59.1L64.1 61.5L62.4 63.1L60.7 64.8ZM61.9 59.1L63.8 57.3L65.8 55.6L67.9 58.1L66.0 59.8L64.1 61.5ZM65.8 55.6L67.9 53.9L69.9 52.3L71.9 54.9L69.9 56.5L67.9 58.1ZM69.9 52.3L72.1 50.7L74.2 49.2L76.0 51.9L73.9 53.4L71.9 54.9ZM74.2 49.2L76.4 47.8L78.6 46.4L80.3 49.1L78.2 50.5L76.0 51.9ZM59.3 57.1L61.2 55.3L63.2 53.6L65.3 56.1L63.4 57.7L61.5 59.5ZM63.2 53.6L65.2 51.9L67.3 50.3L69.3 52.8L67.3 54.4L65.3 56.1ZM67.3 50.3L69.4 48.7L71.5 47.2L73.4 49.8L71.3 51.3L69.3 52.8ZM71.5 47.2L73.7 45.7L75.9 44.3L77.6 47.0L75.5 48.4L73.4 49.8ZM56.3 55.5L58.2 53.7L60.2 51.9L62.3 54.4L60.4 56.1L58.6 57.8ZM60.2 51.9L62.2 50.2L64.2 48.6L66.2 51.1L64.3 52.7L62.3 54.4ZM68.4 45.4L70.6 43.9L72.8 42.4L74.5 45.1L72.4 46.6L70.3 48.0ZM72.8 42.4L75.0 41.0L77.2 39.7L78.9 42.5L76.7 43.8L74.5 45.1ZM51.4 55.9L52.9 54.4L54.3 52.9L56.6 55.3L55.1 56.7L53.7 58.1ZM54.3 52.9L56.2 51.1L58.2 49.4L60.3 51.8L58.4 53.5L56.6 55.3ZM58.2 49.4L60.2 47.7L62.2 46.0L64.3 48.5L62.3 50.2L60.3 51.8ZM62.2 46.0L64.3 44.4L66.4 42.8L68.3 45.5L66.3 47.0L64.3 48.5ZM66.4 42.8L68.6 41.3L70.8 39.9L72.5 42.6L70.4 44.0L68.3 45.5ZM70.8 39.9L73.0 38.5L75.2 37.1L76.9 39.9L74.7 41.2L72.5 42.6ZM49.1 53.6L50.5 52.2L51.9 50.8L54.1 53.1L52.8 54.5L51.4 55.9ZM51.9 50.8L53.8 49.0L55.8 47.2L57.9 49.7L56.0 51.4L54.1 53.1ZM55.8 47.2L57.7 45.5L59.8 43.8L61.8 46.4L59.8 48.0L57.9 49.7ZM63.9 40.7L66.1 39.1L68.3 37.6L70.0 40.3L67.9 41.8L65.9 43.3ZM156.8 68.4L158.8 69.2L160.8 70.1L159.4 73.0L157.5 72.2L155.6 71.4ZM165.5 72.5L167.1 73.3L168.6 74.3L170.1 75.2L168.3 77.9L166.9 77.0L165.4 76.1L164.0 75.3ZM170.1 75.2L171.5 76.2L173.0 77.2L174.4 78.3L172.4 80.8L171.1 79.8L169.7 78.9L168.3 77.9ZM174.4 78.3L175.8 79.4L177.1 80.5L178.5 81.7L176.3 84.1L175.0 83.0L173.7 81.9L172.4 80.8ZM157.9 65.4L158.1 65.4L158.2 65.5L157.1 68.5L156.9 68.5L156.8 68.4ZM167.8 70.0L169.3 70.9L170.8 71.9L172.3 72.8L170.5 75.5L169.1 74.6L167.7 73.7L166.2 72.9ZM172.3 72.8L173.8 73.8L175.2 74.9L176.6 75.9L174.6 78.5L173.3 77.5L171.9 76.5L170.5 75.5ZM176.6 75.9L178.0 77.0L179.4 78.2L180.7 79.3L178.5 81.7L177.2 80.6L176.0 79.5L174.6 78.5ZM180.7 79.3L181.6 80.2L182.5 81.0L180.2 83.3L179.4 82.5L178.5 81.7ZM159.1 62.4L159.2 62.4L159.3 62.4L158.1 65.4L158.0 65.4L157.9 65.4ZM164.2 64.5L166.5 65.7L168.9 66.9L167.3 69.8L165.1 68.6L162.8 67.4ZM173.4 69.7L175.6 71.1L177.7 72.7L175.8 75.3L173.7 73.8L171.6 72.4ZM177.7 72.7L179.8 74.3L181.9 76.0L179.7 78.5L177.8 76.8L175.8 75.3ZM181.9 76.0L183.3 77.3L184.7 78.7L182.5 81.0L181.1 79.7L179.7 78.5ZM160.3 59.3L161.0 59.6L161.6 59.9L160.4 62.9L159.8 62.6L159.1 62.4ZM161.6 59.9L164.1 60.9L166.5 62.0L165.1 64.9L162.8 63.9L160.4 62.9ZM180.0 70.3L182.0 72.0L184.1 73.7L181.9 76.1L180.0 74.5L178.0 72.9ZM161.4 56.3L163.4 57.1L165.3 57.9L164.0 60.9L162.1 60.1L160.3 59.3ZM165.3 57.9L167.7 59.0L170.1 60.2L168.6 63.1L166.3 62.0L164.0 60.9ZM170.1 60.2L172.4 61.5L174.7 62.8L173.0 65.6L170.8 64.3L168.6 63.1ZM174.7 62.8L176.9 64.2L179.1 65.7L177.3 68.4L175.2 66.9L173.0 65.6ZM179.1 65.7L181.3 67.3L183.3 68.9L181.3 71.4L179.3 69.8L177.3 68.4ZM183.3 68.9L185.4 70.6L187.4 72.3L185.2 74.7L183.3 73.0L181.3 71.4ZM187.4 72.3L188.3 73.2L189.2 74.0L187.0 76.4L186.1 75.5L185.2 74.7ZM162.6 53.3L164.7 54.2L166.8 55.1L165.5 58.0L163.5 57.1L161.4 56.3ZM176.2 60.0L178.4 61.4L180.6 62.8L178.8 65.5L176.7 64.1L174.5 62.7ZM184.9 66.0L186.9 67.6L188.9 69.3L186.8 71.8L184.8 70.1L182.9 68.5ZM188.9 69.3L190.2 70.5L191.5 71.7L189.2 74.0L188.0 72.9L186.8 71.8ZM163.7 50.3L166.1 51.2L168.4 52.2L167.1 55.2L164.9 54.2L162.6 53.3ZM173.2 54.6L175.5 55.8L177.8 57.1L176.1 59.9L173.9 58.6L171.7 57.4ZM182.2 60.0L184.4 61.5L186.5 63.1L184.5 65.7L182.5 64.1L180.4 62.7ZM190.6 66.5L192.2 67.9L193.7 69.4L191.5 71.7L190.0 70.3L188.4 68.9ZM164.9 47.3L165.6 47.5L166.2 47.8L165.0 50.8L164.4 50.5L163.7 50.3ZM171.1 49.9L173.4 51.0L175.8 52.3L174.2 55.1L172.0 53.9L169.7 52.8ZM175.8 52.3L178.1 53.6L180.3 54.9L178.6 57.7L176.5 56.4L174.2 55.1ZM193.0 64.3L194.5 65.7L196.0 67.1L193.7 69.4L192.3 68.1L190.9 66.8ZM167.1 44.6L169.5 45.7L171.9 46.7L170.6 49.7L168.2 48.6L165.9 47.7ZM171.9 46.7L174.3 47.9L176.6 49.1L175.1 51.9L172.9 50.8L170.6 49.7ZM185.7 54.5L187.8 56.0L189.9 57.6L188.0 60.2L185.9 58.7L183.8 57.2ZM189.9 57.6L192.0 59.2L194.0 60.9L191.9 63.4L190.0 61.8L188.0 60.2ZM197.9 64.5L198.1 64.6L198.2 64.7L196.0 67.1L195.8 66.9L195.7 66.8ZM167.2 41.2L168.1 41.6L169.1 42.0L167.8 45.0L167.0 44.6L166.1 44.2ZM169.1 42.0L171.5 43.0L173.9 44.1L172.5 47.0L170.2 45.9L167.8 45.0ZM178.6 46.4L180.9 47.7L183.2 49.1L181.5 51.8L179.3 50.5L177.1 49.3ZM196.0 58.3L197.9 60.1L199.9 61.8L197.6 64.2L195.8 62.5L193.9 60.8ZM199.9 61.8L200.2 62.1L200.5 62.4L198.2 64.7L197.9 64.5L197.6 64.2ZM168.4 38.2L169.0 38.5L169.7 38.7L168.5 41.7L167.8 41.5L167.2 41.2ZM169.7 38.7L172.1 39.7L174.5 40.8L173.2 43.7L170.8 42.7L168.5 41.7ZM174.5 40.8L176.9 41.9L179.2 43.1L177.7 46.0L175.5 44.8L173.2 43.7ZM179.2 43.1L181.6 44.4L183.8 45.7L182.2 48.5L180.0 47.2L177.7 46.0ZM183.8 45.7L186.1 47.1L188.3 48.5L186.5 51.2L184.4 49.8L182.2 48.5ZM188.3 48.5L190.5 50.0L192.6 51.5L190.7 54.1L188.6 52.6L186.5 51.2ZM192.6 51.5L194.7 53.1L196.8 54.8L194.7 57.3L192.7 55.7L190.7 54.1ZM200.7 58.2L201.7 59.1L202.7 60.1L200.5 62.4L199.5 61.5L198.5 60.6ZM171.0 35.8L173.4 36.8L175.8 37.9L174.5 40.8L172.2 39.8L169.8 38.8ZM180.6 40.2L182.9 41.4L185.2 42.7L183.5 45.5L181.3 44.3L179.1 43.0ZM185.2 42.7L187.4 44.1L189.6 45.5L187.9 48.2L185.7 46.8L183.5 45.5ZM189.6 45.5L191.8 47.0L194.0 48.5L192.1 51.1L190.0 49.6L187.9 48.2ZM198.1 51.7L200.2 53.4L202.1 55.1L200.0 57.5L198.1 55.9L196.1 54.2ZM202.1 55.1L203.6 56.4L204.9 57.8L202.7 60.1L201.4 58.8L200.0 57.5ZM170.7 32.2L170.9 32.3L171.2 32.4L170.0 35.4L169.8 35.3L169.5 35.2ZM171.2 32.4L173.6 33.3L176.0 34.4L174.7 37.3L172.4 36.3L170.0 35.4ZM180.8 36.6L183.1 37.9L185.4 39.1L183.8 41.9L181.6 40.7L179.3 39.5ZM185.4 39.1L187.7 40.5L189.9 41.8L188.2 44.6L186.0 43.2L183.8 41.9ZM189.9 41.8L192.1 43.3L194.3 44.8L192.4 47.4L190.3 46.0L188.2 44.6ZM194.3 44.8L196.4 46.3L198.5 47.9L196.5 50.4L194.5 48.9L192.4 47.4ZM174.9 30.4L177.3 31.4L179.7 32.5L178.3 35.4L176.0 34.4L173.6 33.3ZM179.7 32.5L182.0 33.7L184.4 34.9L182.8 37.7L180.6 36.5L178.3 35.4ZM184.4 34.9L186.7 36.1L188.9 37.4L187.3 40.2L185.1 38.9L182.8 37.7ZM193.4 40.2L195.6 41.7L197.7 43.2L195.8 45.9L193.7 44.4L191.6 42.9ZM205.9 49.8L207.7 51.4L209.4 53.1L207.2 55.4L205.5 53.8L203.8 52.3ZM173.0 26.1L175.0 26.9L177.1 27.8L175.8 30.8L173.8 29.9L171.9 29.2ZM177.1 27.8L179.5 28.8L181.8 30.0L180.4 32.9L178.1 31.8L175.8 30.8ZM181.8 30.0L184.2 31.1L186.5 32.4L185.0 35.2L182.7 34.0L180.4 32.9ZM186.5 32.4L188.8 33.6L191.1 35.0L189.4 37.7L187.2 36.4L185.0 35.2ZM191.1 35.0L193.3 36.3L195.5 37.8L193.7 40.5L191.6 39.1L189.4 37.7ZM199.8 40.8L201.9 42.4L204.0 44.0L202.0 46.5L200.0 44.9L197.9 43.4Z"/><path fill="#000" d="M13.7 103.0L14.8 99.0L16.0 95.0L17.4 91.1L18.9 87.3L20.5 83.5L22.3 79.8L24.1 76.1L26.1 72.5L38.7 79.7L36.9 82.9L35.3 86.2L33.7 89.5L32.3 92.8L31.0 96.2L29.8 99.6L28.7 103.1L27.7 106.6ZM234.1 67.1L236.3 70.6L238.4 74.1L240.3 77.8L242.1 81.5L243.8 85.2L245.4 89.0L246.8 92.9L248.2 96.8L232.9 101.6L231.8 98.2L230.5 94.9L229.1 91.6L227.7 88.3L226.1 85.1L224.4 81.9L222.6 78.8L220.7 75.8Z"/><rect x="114.0" y="13.0" width="30.0" height="15.0" rx="4" fill="#050505"/></g></svg>
  </div>
  <div class="a" style="left:236px;top:45px;width:1px;height:272px;background:#b4a400"></div>
  <div class="a" style="left:102px;top:180px;width:274px;height:1px;background:#b4a400"></div>

  <!-- right panel -->
  <div class="btn" style="left:443px;top:25px;width:74.5px;height:17px"></div>
  <div class="btn" style="left:520.7px;top:25px;width:74.8px;height:17px"></div>
  <div class="t bd" style="left:469px;top:29px;font-size:10.6px;color:#dedede;transform:scaleX(0.93)">Load</div>
  <div class="t bd" style="left:546.5px;top:29px;font-size:10.6px;color:#dedede;transform:scaleX(0.9)">Save</div>
  <div class="a" style="left:445px;top:53.5px;width:148.5px;height:40px;background:#252525"></div>
  <div class="t bd" style="left:449.5px;top:57.8px;font-size:9.6px;color:#dadada;transform:scaleX(0.83)">Name:</div>
  <div class="a" style="left:449px;top:71.5px;width:27px;height:1.6px;background:#36a81a"></div>
  <div class="a" style="left:482px;top:58px;width:107px;height:12px;border:1px solid #474747;background:#2b2b2b"></div>
  <div class="t bd" style="left:486.8px;top:59.6px;font-size:8.5px;color:#d8d8d8;transform:scaleX(0.77)">MaskLayer</div>
  <div class="t bd" style="left:449.3px;top:77.2px;font-size:9.4px;color:#d2d2d2;transform:scaleX(0.92)">[Bitmap]</div>
  <svg class="a" style="left:534px;top:76px" width="58" height="16" viewBox="534 76 58 16">
    <path d="M536.6,84.4 Q542.2,78.6 547.8,84.4" fill="none" stroke="#575757" stroke-width="1.4"/>
    <path d="M537.2,84.6 Q542.2,88.6 547.2,84.6" fill="none" stroke="#4e4e4e" stroke-width="0.9"/>
    <circle cx="541.8" cy="84" r="2" fill="#575757"/>
    <circle cx="541.3" cy="83.5" r="0.7" fill="#2a2a2a"/>
    <rect x="552.6" y="80.2" width="8.1" height="8" rx="1.6" fill="none" stroke="#575757" stroke-width="1.2"/>
    <rect x="567.1" y="80.2" width="8.9" height="8" rx="0.4" fill="none" stroke="#595959" stroke-width="1.1"/>
    <path d="M568.4,87.6 Q569,81.6 575.4,81.2 Q574.8,87.2 568.4,87.6 Z" fill="#595959"/>
    <path d="M581.7,83.2 h6.1 v5.5 h-6.1 Z" fill="#dadada"/>
    <path d="M586.2,83.6 v4.7" stroke="#9a9a9a" stroke-width="0.7"/>
    <path d="M581.1,82 L587.6,79.1" stroke="#dadada" stroke-width="1.8"/>
    <path d="M583.2,80.2 L584,78.6 L585.2,78.2" fill="none" stroke="#cfcfcf" stroke-width="1"/>
  </svg>
  <div class="sb" style="left:447px;top:101px;width:45.5px;height:15px"></div>
  <div class="sb" style="left:496px;top:101px;width:45.5px;height:15px"></div>
  <div class="sb" style="left:545.3px;top:101px;width:45.7px;height:15px"></div>
  <div class="t bd" style="left:454.5px;top:104.5px;font-size:9px;color:#dcdcdc;transform:scaleX(0.925)">+ Empty</div>
  <div class="t bd" style="left:500.6px;top:104.5px;font-size:9px;color:#dcdcdc;transform:scaleX(0.895)">+ Polygon</div>
  <div class="t bd" style="left:551px;top:104.5px;font-size:9px;color:#dcdcdc;transform:scaleX(0.94)">+ Bitmap</div>

  <!-- zoom bar -->
  <div class="t" style="left:440.7px;top:359.8px;font-size:10.4px;color:#e4e4e4;transform:scaleX(0.83)">Zoom</div>
  <div class="a" style="left:472px;top:362.8px;width:65px;height:1.6px;background:#0a8ee0"></div>
  <div class="a" style="left:475px;top:358.5px;width:10.5px;height:10.5px;border-radius:50%;background:#0a8ee0"></div>
  <div class="a" style="left:547px;top:358px;width:27px;height:11px;border:1px solid #727272;background:#3b3b3b"></div>
  <div class="t" style="left:551.5px;top:359.5px;font-size:8.6px;color:#cfcfcf">80.0</div>
  <div class="a" style="left:580.5px;top:358px;width:15px;height:11px;border:1px solid #6a6a6a"></div>
  <svg class="a" style="left:583px;top:359px" width="10" height="9" viewBox="0 0 10 9"><path d="M3.3,2.6 A2.4,2.4 0 1 0 5,2" fill="none" stroke="#d0d0d0" stroke-width="1"/><path d="M4.2,1 L6.2,2 L4.4,3.2 Z" fill="#d0d0d0"/></svg>

  <!-- bottom -->
  <div class="a" style="left:136px;top:382px;width:217px;height:14.5px;background:#1e1e1e;border-top:1px solid #a8a8a8;border-left:1px solid #a8a8a8;border-right:1px solid #e8e8e8;border-bottom:1px solid #e8e8e8"></div>
  <div class="t" style="left:140px;top:386.3px;font-size:8.5px;color:#ebebeb;transform:scaleX(0.855)">GRAY  [4096x4096]  6.46 Fps</div>
  <div class="a" style="left:341.3px;top:384.5px;width:10px;height:10.3px;background:#e4e4e4"></div>
  <svg class="a" style="left:341px;top:384px" width="11" height="11" viewBox="0 0 11 11"><path d="M3.5,4.4 h4.5 l-2.25,2.6 Z" fill="#111"/></svg>
  <div class="a" style="left:136px;top:402px;width:217px;height:15px;background:#2a2a2a;border-top:1px solid #9a9a9a;border-left:1px solid #9a9a9a;border-right:1px solid #d8d8d8;border-bottom:1px solid #d8d8d8"></div>
  <div class="a" style="left:341.3px;top:404.2px;width:10px;height:10.6px;background:#b8b8b8"></div>
  <svg class="a" style="left:341px;top:404px" width="11" height="11" viewBox="0 0 11 11"><path d="M3.5,4.6 h4.5 l-2.25,2.6 Z" fill="#7a7a7a"/></svg>
  <div class="btn" style="left:359px;top:382px;width:50px;height:15px;border-color:#222"></div>
  <div class="btn" style="left:359px;top:401px;width:50px;height:15px;border-color:#222"></div>
  <div class="t" style="left:371px;top:386.8px;font-size:8.2px;color:#dcdcdc;transform:scaleX(0.93)">Options</div>
  <div class="a" style="left:371.3px;top:394.3px;width:4px;height:0.8px;background:#bbb"></div>
  <div class="t" style="left:372px;top:405.8px;font-size:8.2px;color:#dcdcdc;transform:scaleX(0.93)">Format</div>
  <div class="a" style="left:372px;top:413.3px;width:4px;height:0.8px;background:#bbb"></div>
  <div class="a" style="left:130px;top:423.5px;width:340px;height:15.5px;background:#3d3d3d;border-top:1px solid #9c9c9c;border-left:1px solid #9c9c9c;border-right:1px solid #d0d0d0;border-bottom:1px solid #d0d0d0"></div>
  <div class="a" style="left:131px;top:424.5px;width:51px;height:13.5px;background:#595959"></div>
  <div class="btn" style="left:130px;top:448px;width:50px;height:15px;border-color:#222"></div>
  <div class="btn" style="left:272px;top:448px;width:50px;height:15px;border-color:#222"></div>
  <div class="btn" style="left:420px;top:448px;width:50px;height:15px;border-color:#222"></div>
  <div class="t" style="left:146.5px;top:452.3px;font-size:8.2px;color:#e0e0e0;transform:scaleX(0.95)">Back</div>
  <div class="a" style="left:146.8px;top:460px;width:5px;height:0.8px;background:#bbb"></div>
  <div class="t" style="left:285.5px;top:452.3px;font-size:8.2px;color:#e0e0e0;transform:scaleX(0.87)">Cancel</div>
  <div class="a" style="left:285.6px;top:460px;width:5px;height:0.8px;background:#bbb"></div>
  <div class="t" style="left:436.7px;top:452.3px;font-size:8.2px;color:#e0e0e0;transform:scaleX(0.93)">Next</div>
  <div class="a" style="left:436.7px;top:460px;width:5px;height:0.8px;background:#bbb"></div>

  <!-- annotations -->
  <div class="a" style="left:0;top:194px;width:30px;height:27px;border:2px solid #f5ea00"></div>
  <div class="t" style="left:33.5px;top:198.8px;font-size:21.3px;color:#f5ea00">A</div>
  <div class="a" style="left:124px;top:371px;width:234px;height:29.5px;border:3.7px solid #e21c25"></div>
  <div class="t" style="left:98.8px;top:380.6px;font-size:21.8px;color:#e21c25;transform:scaleX(0.9)">B</div>
  <svg class="a" style="left:400px;top:385px" width="80" height="50" viewBox="400 385 80 50"><polygon points="412.7,407 438.9,394 438.9,400.3 465.6,400.3 465.6,414 438.9,414 438.9,420.7" fill="none" stroke="#e21c25" stroke-width="1.8" stroke-linejoin="miter"/></svg>
</div>
</body></html>
